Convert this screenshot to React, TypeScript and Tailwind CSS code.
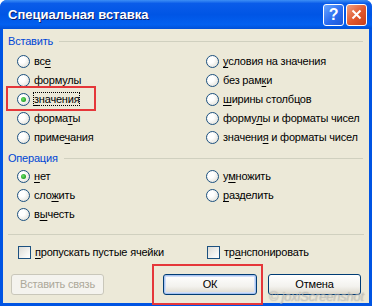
import type { ReactNode } from 'react'

const FONT = { fontFamily: '"Liberation Sans", Arial, sans-serif' }

function U({ children }: { children: ReactNode }) {
  return <span className="underline underline-offset-2">{children}</span>
}

function Radio({ checked }: { checked?: boolean }) {
  return (
    <span className="relative flex h-[13px] w-[13px] shrink-0 items-center justify-center rounded-full border border-[#1c5180] bg-[radial-gradient(circle_at_35%_35%,#ffffff_30%,#e4e3dc_80%,#cfcdc4_100%)]">
      {checked && (
        <span className="h-[5px] w-[5px] rounded-full bg-[radial-gradient(circle_at_40%_40%,#6ee06e_0%,#21a121_70%)]" />
      )}
    </span>
  )
}

function Check() {
  return (
    <span className="h-[13px] w-[13px] shrink-0 border border-[#1c5180] bg-[linear-gradient(135deg,#dcdbd5_0%,#f6f6f4_70%,#ffffff_100%)]" />
  )
}

function Option({ checked, children }: { checked?: boolean; children: ReactNode }) {
  return (
    <div className="flex h-[19px] items-center gap-[4px]">
      <Radio checked={checked} />
      <span className="whitespace-nowrap">{children}</span>
    </div>
  )
}

function Group({ title }: { title: string }) {
  return (
    <div className="flex h-[14px] items-center gap-[6px] pl-[5px] pr-[6px]">
      <span className="text-[#0046d5]">{title}</span>
      <span className="h-px flex-1 bg-[#d0d0bf]" />
    </div>
  )
}

const BTN =
  'flex h-[21px] items-center justify-center rounded-[3px] border border-[#003c74] bg-[linear-gradient(to_bottom,#ffffff_0%,#f3f2ee_60%,#dcd8cc_100%)]'

export default function App() {
  return (
    <div
      style={FONT}
      className="relative flex h-[306px] w-[372px] flex-col overflow-hidden rounded-t-[7px] bg-[#0054e3] text-[11px] leading-[13px] tracking-[-0.2px] text-black"
    >
      <div className="flex h-[29px] shrink-0 items-center justify-between bg-[linear-gradient(to_bottom,#3d8ff5_0%,#0a5ce9_12%,#0055e5_50%,#0260f0_85%,#0050d8_100%)] pl-[8px] pr-[5px]">
        <span className="text-[13px] font-bold tracking-normal text-white [text-shadow:1px_1px_#0a1e6e]">
          Специальная вставка
        </span>
        <div className="flex gap-[2px]">
          <span className="flex h-[22px] w-[21px] items-center justify-center rounded-[3px] border border-white bg-[linear-gradient(135deg,#6aa6ff_0%,#2a6cf0_55%,#1d58d8_100%)] text-[16px] font-bold text-white">
            ?
          </span>
          <span className="flex h-[22px] w-[21px] items-center justify-center rounded-[3px] border border-white bg-[linear-gradient(135deg,#f0a080_0%,#e0562c_55%,#c8401c_100%)]">
            <svg width="11" height="11" viewBox="0 0 11 11">
              <path d="M1.5 1.5 L9.5 9.5 M9.5 1.5 L1.5 9.5" stroke="white" strokeWidth="2" />
            </svg>
          </span>
        </div>
      </div>

      <div className="mx-[3px] mb-[3px] flex flex-1 flex-col bg-[#ece9d8] pt-[5px]">
        <Group title="Вставить" />
        <div className="grid grid-cols-[188px_1fr] pt-[4px]">
          <div className="flex flex-col pl-[14px]">
            <Option>вс<U>е</U></Option>
            <Option>формулы</Option>
            <div className="relative">
              <Option checked>
                <span className="outline-1 outline-dotted outline-offset-0 outline-black">
                  <U>з</U>начения
                </span>
              </Option>
              <span className="absolute left-[-11px] top-[-4px] h-[25px] w-[90px] border-2 border-[#e5373a]" />
            </div>
            <Option>форма<U>т</U>ы</Option>
            <Option>приме<U>ч</U>ания</Option>
          </div>
          <div className="flex flex-col pl-[15px]">
            <Option><U>у</U>словия на значения</Option>
            <Option>без рам<U>к</U>и</Option>
            <Option><U>ш</U>ирины столбцов</Option>
            <Option>форму<U>л</U>ы и форматы чисел</Option>
            <Option>значени<U>я</U> и форматы чисел</Option>
          </div>
        </div>

        <div className="pt-[4px]">
          <Group title="Операция" />
        </div>
        <div className="grid grid-cols-[188px_1fr] pt-[2px]">
          <div className="flex flex-col pl-[14px]">
            <Option checked><U>н</U>ет</Option>
            <Option>сло<U>ж</U>ить</Option>
            <Option>в<U>ы</U>честь</Option>
          </div>
          <div className="flex flex-col pl-[15px]">
            <Option>у<U>м</U>ножить</Option>
            <Option><U>р</U>азделить</Option>
          </div>
        </div>

        <div className="mx-[5px] mt-[10px] h-px bg-[#d0d0bf]" />

        <div className="grid grid-cols-[188px_1fr] pt-[11px]">
          <div className="flex items-center gap-[4px] pl-[15px]">
            <Check />
            <span><U>п</U>ропускать пустые ячейки</span>
          </div>
          <div className="flex items-center gap-[4px] pl-[16px]">
            <Check />
            <span>тр<U>а</U>нспонировать</span>
          </div>
        </div>

        <div className="flex items-center px-[8px] pt-[15px]">
          <span className="flex h-[21px] w-[93px] items-center justify-center rounded-[3px] border border-[#c9c7ba] bg-[#f4f3ee] text-[#aca899]">
            Вставить связь
          </span>
          <div className="relative ml-[59px]">
            <span className={`${BTN} w-[94px] shadow-[inset_0_0_0_1px_#a9c4f0,inset_0_0_0_2px_#cfdef8]`}>
              ОК
            </span>
            <span className="absolute left-[-11px] top-[-10px] h-[41px] w-[111px] border-2 border-[#e5373a]" />
          </div>
          <span className={`${BTN} ml-[11px] w-[93px]`}>Отмена</span>
        </div>
      </div>

      <span className="absolute bottom-[3px] right-[8px] text-[13px] italic text-white/40 [text-shadow:0_0_1px_rgba(90,90,90,0.6)]">
        © joxiScreenshot
      </span>
    </div>
  )
}
